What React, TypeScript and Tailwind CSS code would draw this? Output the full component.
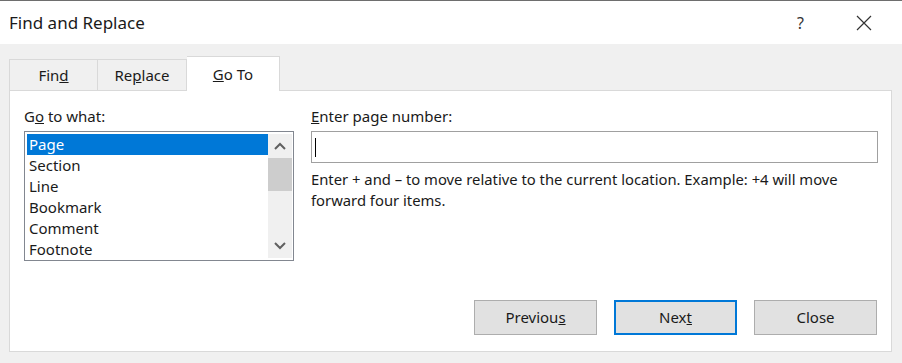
import React from 'react';

const font = { fontFamily: '"Segoe UI", "Noto Sans", "Open Sans", sans-serif' };

const items = ['Page', 'Section', 'Line', 'Bookmark', 'Comment', 'Footnote'];

const Chevron: React.FC<{ up?: boolean }> = ({ up }) => (
  <svg width="12" height="8" viewBox="0 0 12 8" fill="none">
    <path
      d={up ? 'M1 7 L6 2 L11 7' : 'M1 1 L6 6 L11 1'}
      stroke="#606060"
      strokeWidth="2"
    />
  </svg>
);

const Btn: React.FC<{ children: React.ReactNode; focused?: boolean }> = ({ children, focused }) => (
  <button
    className={`w-[123px] h-[35px] bg-[#e1e1e1] text-[15px] text-[#1a1a1a] flex items-center justify-center ${
      focused ? 'border-2 border-[#0078d7]' : 'border border-[#adadad]'
    }`}
  >
    {children}
  </button>
);

export default function App() {
  return (
    <div
      style={font}
      className="w-[902px] h-[363px] bg-[#f0f0f0] border-t border-[#6e6e6e] flex flex-col text-[#1a1a1a] overflow-hidden"
    >
      {/* Title bar */}
      <div className="h-[43px] bg-white flex items-center justify-between pl-[9px] pr-[30px] shrink-0">
        <span className="text-[17px]">Find and Replace</span>
        <div className="flex items-center gap-[52px]">
          <span className="text-[16px] text-[#333]">?</span>
          <svg width="16" height="16" viewBox="0 0 16 16">
            <path d="M1 1 L15 15 M15 1 L1 15" stroke="#333" strokeWidth="1.2" />
          </svg>
        </div>
      </div>

      {/* Tabs */}
      <div className="h-[46px] flex items-end pl-[9px] shrink-0 relative z-10">
        <div className="w-[89px] h-[31px] border border-b-0 border-[#d9d9d9] flex items-center justify-center text-[15px]">
          Fin<u>d</u>
        </div>
        <div className="w-[89px] h-[31px] border border-b-0 border-l-0 border-[#d9d9d9] flex items-center justify-center text-[15px]">
          Re<u>p</u>lace
        </div>
        <div className="w-[93px] h-[35px] -mb-px bg-white border border-b-0 border-l-0 border-[#d9d9d9] flex items-center justify-center text-[15px]">
          <u>G</u>o To
        </div>
      </div>

      {/* Panel */}
      <div className="ml-[9px] w-[883px] h-[262px] bg-white border border-[#d9d9d9] flex flex-col pl-[14px] pr-[13px] pt-[15px] pb-[15px]">
        <div className="flex gap-[17px]">
          <div className="w-[270px] flex flex-col">
            <div className="text-[15px] leading-[21px] mb-[4px]">
              G<u>o</u> to what:
            </div>
            <div className="h-[130px] border border-[#828790] flex p-[2px] pr-[1px]">
              <div className="flex-1 flex flex-col">
                {items.map((it, i) => (
                  <div
                    key={it}
                    className={`h-[21px] leading-[21px] text-[15px] px-[2px] ${
                      i === 0 ? 'bg-[#0078d7] text-white' : ''
                    }`}
                  >
                    {it}
                  </div>
                ))}
              </div>
              <div className="w-[24px] bg-[#f0f0f0] flex flex-col">
                <div className="h-[24px] flex items-center justify-center">
                  <Chevron up />
                </div>
                <div className="h-[33px] bg-[#cdcdcd]"></div>
                <div className="flex-1"></div>
                <div className="h-[24px] flex items-center justify-center">
                  <Chevron />
                </div>
              </div>
            </div>
          </div>

          <div className="flex-1 flex flex-col">
            <div className="text-[15px] leading-[21px] mb-[4px]">
              <u>E</u>nter page number:
            </div>
            <div className="h-[32px] border border-[#a0a0a0] flex items-center pl-[3px]">
              <span className="w-px h-[19px] bg-black"></span>
            </div>
            <div className="text-[14.8px] leading-[21px] mt-[6px]">
              Enter + and – to move relative to the current location. Example: +4 will move
              <br />
              forward four items.
            </div>
          </div>
        </div>

        <div className="flex-1"></div>

        <div className="flex justify-end gap-[17px] mr-[1px] mb-[1px]">
          <Btn>
            Previou<u>s</u>
          </Btn>
          <Btn focused>
            Nex<u>t</u>
          </Btn>
          <Btn>Close</Btn>
        </div>
      </div>
    </div>
  );
}
